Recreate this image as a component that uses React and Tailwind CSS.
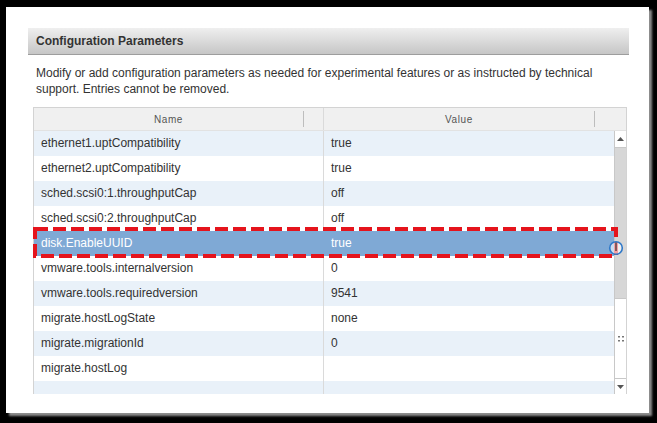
import React from 'react';

const rows = [
  ['ethernet1.uptCompatibility', 'true'],
  ['ethernet2.uptCompatibility', 'true'],
  ['sched.scsi0:1.throughputCap', 'off'],
  ['sched.scsi0:2.throughputCap', 'off'],
  ['disk.EnableUUID', 'true'],
  ['vmware.tools.internalversion', '0'],
  ['vmware.tools.requiredversion', '9541'],
  ['migrate.hostLogState', 'none'],
  ['migrate.migrationId', '0'],
  ['migrate.hostLog', ''],
  ['', ''],
];

const SELECTED = 4;

function Row({ name, value, index }) {
  const selected = index === SELECTED;
  const bg = selected ? 'bg-[#7fa9d5] text-white' : index % 2 === 0 ? 'bg-[#e9f1f9] text-[#333]' : 'bg-white text-[#333]';
  return (
    <div className={`flex h-[25px] shrink-0 text-[12px] ${bg}`}>
      <div className={`flex w-[290px] shrink-0 items-center border-r pb-[2px] pl-[7px] ${selected ? 'border-[#7fa9d5]' : 'border-[#dadada]'}`}>
        {name}
      </div>
      <div className="flex items-center pb-[2px] pl-[7px]">{value}</div>
    </div>
  );
}

function Scrollbar() {
  return (
    <div className="flex w-[12px] shrink-0 flex-col border-l border-[#c8c8c8]">
      <div className="flex h-[17px] items-center justify-center border-b border-[#c8c8c8] bg-white">
        <svg width="7" height="4" viewBox="0 0 7 4"><polygon points="3.5,0 7,4 0,4" fill="#555" /></svg>
      </div>
      <div className="flex-1 bg-[#d7d7d7]" />
      <div className="flex h-[81px] items-center justify-center border-y border-[#c8c8c8] bg-white">
        <svg width="6" height="6" viewBox="0 0 6 6">
          <rect x="0" y="0" width="2" height="1.5" fill="#777" />
          <rect x="4" y="0" width="2" height="1.5" fill="#777" />
          <rect x="0" y="4" width="2" height="1.5" fill="#777" />
          <rect x="4" y="4" width="2" height="1.5" fill="#777" />
        </svg>
      </div>
      <div className="flex h-[15px] items-center justify-center bg-white">
        <svg width="7" height="4" viewBox="0 0 7 4"><polygon points="0,0 7,0 3.5,4" fill="#555" /></svg>
      </div>
    </div>
  );
}

export default function App() {
  return (
    <div className="h-[423px] w-[657px] overflow-hidden bg-black pl-[6px] pt-[7px]" style={{ fontFamily: '"Liberation Sans", Arial, sans-serif' }}>
      <div className="h-[406px] w-[643px] bg-white pl-[22px] pt-[21px] shadow-[3px_3px_2px_#8c8c8c]">
        <div className="w-[601px]">
          <div className="flex h-[27px] items-center border-b border-[#9d9d9d] bg-gradient-to-b from-[#efefef] to-[#c6c6c6] px-2 text-[12px] font-bold text-[#333]">
            Configuration Parameters
          </div>
          <p className="mt-[10px] px-2 text-[12px] leading-[16px] text-[#333]">
            Modify or add configuration parameters as needed for experimental features or as instructed by technical support. Entries cannot be removed.
          </p>
          <div className="relative ml-[5px] mt-[10px] w-[594px] border-x border-t border-[#d3d3d3]">
            <div className="flex h-[23px] items-center border-b border-[#e2e2e2] bg-[#f0f0f0] text-[10px] tracking-[0.6px] text-[#555]">
              <div className="flex h-full w-[290px] shrink-0 items-center border-r border-[#dadada]">
                <div className="w-[269px] text-center">Name</div>
                <div className="h-[16px] w-px bg-[#bdbdbd]" />
              </div>
              <div className="flex h-full items-center">
                <div className="w-[270px] text-center">Value</div>
                <div className="h-[16px] w-px bg-[#bdbdbd]" />
              </div>
            </div>
            <div className="flex h-[263px] overflow-hidden">
              <div className="flex w-[580px] shrink-0 flex-col">
                {rows.map(([n, v], i) => (
                  <Row key={i} name={n} value={v} index={i} />
                ))}
              </div>
              <Scrollbar />
            </div>

            <svg className="absolute left-[-1px] top-[119px]" width="586" height="31" viewBox="0 0 586 31">
              <rect x="2" y="2" width="581" height="27" fill="none" stroke="#e5141c" strokeWidth="4" strokeDasharray="13 5" />
            </svg>
            <svg className="absolute left-[574px] top-[132px]" width="16" height="16" viewBox="0 0 16 16">
              <circle cx="8" cy="8" r="6.3" fill="rgba(255,255,255,0.6)" stroke="#2f78c8" strokeWidth="1.6" />
              <line x1="8" y1="2.5" x2="8" y2="11" stroke="#111" strokeWidth="1" />
            </svg>
          </div>
        </div>
      </div>
    </div>
  );
}
